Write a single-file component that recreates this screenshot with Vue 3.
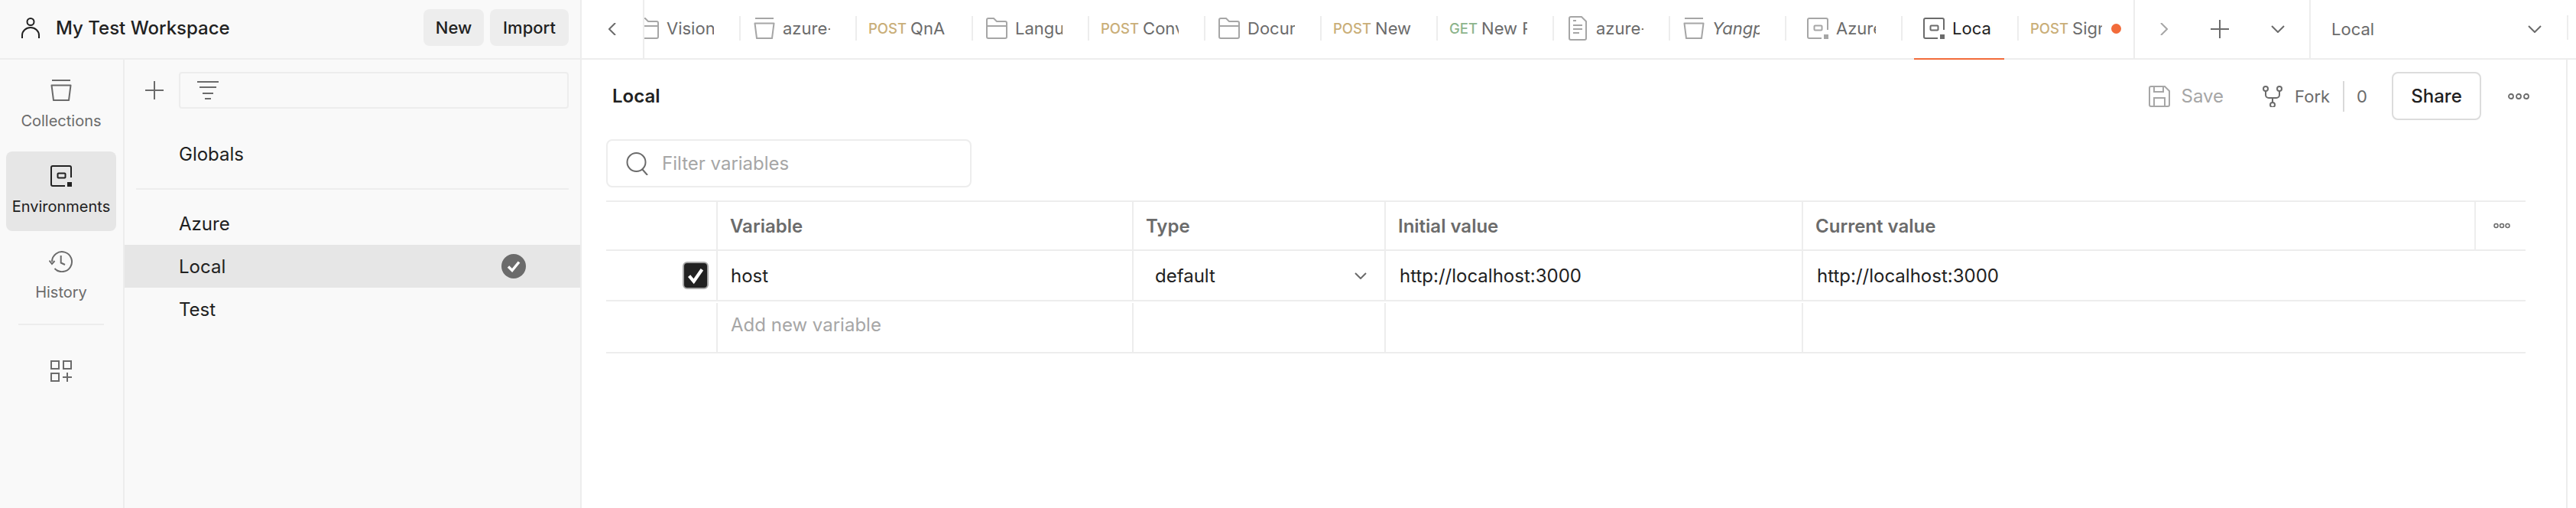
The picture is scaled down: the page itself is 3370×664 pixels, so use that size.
<script setup>
const tabs = [
  { icon: 'folder', text: 'Vision' },
  { icon: 'coll', text: 'azure-sdk' },
  { method: 'POST', text: 'QnA' },
  { icon: 'folder', text: 'Language' },
  { method: 'POST', text: 'Conversation' },
  { icon: 'folder', text: 'Document' },
  { method: 'POST', text: 'New Request' },
  { method: 'GET', text: 'New Request' },
  { icon: 'doc', text: 'azure-sdk' },
  { icon: 'coll', text: 'Yangpu', italic: true },
  { icon: 'env', text: 'Azure' },
  { icon: 'env', text: 'Local', active: true },
  { method: 'POST', text: 'Sign in', dirty: true }
]
</script>

<template>
  <div class="app">
    <aside class="left">
      <header class="ws">
        <svg class="i-person" viewBox="0 0 24 27" fill="none" stroke="#212121" stroke-width="2">
          <circle cx="12" cy="5.5" r="4.5" />
          <path d="M1 27v-4a11 10 0 0 1 22 0v4" />
        </svg>
        <span class="ws-name">My Test Workspace</span>
        <button class="ws-btn btn-new">New</button>
        <button class="ws-btn btn-imp">Import</button>
      </header>
      <div class="left-body">
        <nav class="nav">
          <div class="nav-item">
            <svg class="i28" viewBox="0 0 28 28" fill="none" stroke="#6b6b6b" stroke-width="2"><path d="M2 1h24M1.500 7.500h25L24 27H4z" stroke-linejoin="round" /></svg>
            <span>Collections</span>
          </div>
          <div class="nav-item on">
            <svg class="i28" viewBox="0 0 28 28" fill="none" stroke="#212121" stroke-width="2"><path d="M27 16V3a2 2 0 0 0-2-2H3a2 2 0 0 0-2 2v22a2 2 0 0 0 2 2h16" /><rect x="9.500" y="10.500" width="10" height="6" rx="1" /><rect x="22" y="22" width="6" height="6" fill="#212121" stroke="none" /></svg>
            <span>Environments</span>
          </div>
          <div class="nav-item">
            <svg class="i-hist" viewBox="0 0 32 28" fill="none" stroke="#6b6b6b" stroke-width="2"><path d="M4 14A13 13 0 1 1 7.500 23" /><path d="M0.500 12.500L4 17l3.500-4" /><path d="M15.700 6v9.500L21 18" /></svg>
            <span>History</span>
          </div>
          <div class="nav-sep"></div>
          <svg class="i28 nav-grid" viewBox="0 0 28 28" fill="none" stroke="#6b6b6b" stroke-width="2"><rect x="1" y="1" width="10" height="10" /><rect x="17" y="1" width="10" height="10" /><rect x="1" y="17" width="10" height="10" /><path d="M22 16v12M16 22h12" /></svg>
        </nav>
        <section class="envs">
          <div class="env-tools">
            <svg class="i-plus" viewBox="0 0 24 24" stroke="#6b6b6b" stroke-width="2"><path d="M12 0v24M0 12h24" /></svg>
            <div class="env-filter">
              <svg class="i-filter" viewBox="0 0 28 24" stroke="#6b6b6b" stroke-width="2"><path d="M0 1h28M3 8h22M7 16h14M10 23h8" /></svg>
            </div>
          </div>
          <div class="env-row global-row">Globals</div>
          <div class="env-sep"></div>
          <div class="env-row">Azure</div>
          <div class="env-row sel">
            <span>Local</span>
            <svg class="i-check" viewBox="0 0 32 32"><circle cx="16" cy="16" r="16" fill="#6b6b6b" /><path d="M9 16.500l5 5 9-11" fill="none" stroke="#fff" stroke-width="3.500" /></svg>
          </div>
          <div class="env-row">Test</div>
        </section>
      </div>
    </aside>

    <main class="right">
      <div class="topbar">
        <div class="back">
          <svg class="i-chev" viewBox="0 0 10 16" fill="none" stroke="#6b6b6b" stroke-width="2"><path d="M9 0L1 8l8 8" /></svg>
        </div>
        <div class="tabs">
          <div v-for="(t, n) in tabs" :key="n" class="tab" :class="{ active: t.active, dirty: t.dirty }">
            <div class="tab-clip">
              <span v-if="t.method" class="method" :class="t.method.toLowerCase()">{{ t.method }}</span>
              <span v-else class="tab-ico" :class="{ 'ico-env': t.icon === 'env' }">
                <svg v-if="t.icon === 'folder'" viewBox="0 0 28 28" fill="none" stroke="#a6a6a6" stroke-width="2"><path d="M1 25V3a2 2 0 0 1 2-2h7l4 4h11a2 2 0 0 1 2 2v18a2 2 0 0 1-2 2H3a2 2 0 0 1-2-2zM1 11h26" /></svg>
                <svg v-else-if="t.icon === 'coll'" viewBox="0 0 28 28" fill="none" stroke="#a6a6a6" stroke-width="2"><path d="M2 1h24M1.500 7.500h25L24 27H4z" stroke-linejoin="round" /></svg>
                <svg v-else-if="t.icon === 'doc'" class="ico-doc" viewBox="0 0 24 32" fill="none" stroke="#a6a6a6" stroke-width="2"><path d="M3 1h14l6 6v22a2 2 0 0 1-2 2H3a2 2 0 0 1-2-2V3a2 2 0 0 1 2-2z" /><path d="M6 6h4M6 12h12M6 17h12M6 22h8" /></svg>
                <svg v-else viewBox="0 0 28 28" fill="none" :stroke="t.active ? '#6b6b6b' : '#a6a6a6'" stroke-width="2"><path d="M27 16V3a2 2 0 0 0-2-2H3a2 2 0 0 0-2 2v22a2 2 0 0 0 2 2h16" /><rect x="9.500" y="10.500" width="10" height="6" rx="1" /><rect x="22" y="22" width="6" height="6" :fill="t.active ? '#6b6b6b' : '#a6a6a6'" stroke="none" /></svg>
              </span>
              <span class="tab-text" :class="{ ital: t.italic }">{{ t.text }}</span>
            </div>
            <span v-if="t.dirty" class="dot"></span>
          </div>
        </div>
        <div class="tab-ctrl">
          <svg class="i-chev" viewBox="0 0 10 16" fill="none" stroke="#a6a6a6" stroke-width="2"><path d="M1 0l8 8-8 8" /></svg>
          <svg class="i-plus" viewBox="0 0 24 24" stroke="#6b6b6b" stroke-width="2"><path d="M12 0v24M0 12h24" /></svg>
          <svg class="i-down" viewBox="0 0 18 10" fill="none" stroke="#6b6b6b" stroke-width="2"><path d="M1 1l8 8 8-8" /></svg>
        </div>
        <div class="env-sel">
          <span>Local</span>
          <svg class="i-down" viewBox="0 0 18 10" fill="none" stroke="#6b6b6b" stroke-width="2"><path d="M1 1l8 8 8-8" /></svg>
        </div>
        <div class="strip-top"></div>
      </div>

      <div class="content">
        <div class="main">
          <div class="title-row">
            <h1>Local</h1>
            <div class="actions">
              <svg class="i28" viewBox="0 0 28 28" fill="none" stroke="#a6a6a6" stroke-width="2"><path d="M1 3a2 2 0 0 1 2-2h18l6 6v18a2 2 0 0 1-2 2H3a2 2 0 0 1-2-2zM7 1v7h12V1M7 27V16h14v11" /></svg>
              <span class="save">Save</span>
              <svg class="i28 i-fork" viewBox="0 0 28 28" fill="none" stroke="#6b6b6b" stroke-width="2"><circle cx="5" cy="4" r="3" /><circle cx="23" cy="4" r="3" /><circle cx="14" cy="25" r="3" /><path d="M5 7v5a4 4 0 0 0 4 4h10a4 4 0 0 0 4-4V7M14 16v6" /></svg>
              <span class="fork">Fork</span>
              <span class="vbar"></span>
              <span class="fork count">0</span>
              <button class="share">Share</button>
              <svg class="i-more" viewBox="0 0 28 8" fill="none" stroke="#6b6b6b" stroke-width="1.800"><circle cx="4" cy="4" r="3" /><circle cx="14" cy="4" r="3" /><circle cx="24" cy="4" r="3" /></svg>
            </div>
          </div>
          <div class="search">
            <svg class="i-search" viewBox="0 0 30 30" fill="none" stroke="#6b6b6b" stroke-width="2"><circle cx="13.500" cy="13" r="12" /><path d="M21 22l7 8" /></svg>
            <span>Filter variables</span>
          </div>
          <div class="table">
            <div class="tr head">
              <div class="td"></div>
              <div class="td">Variable</div>
              <div class="td">Type</div>
              <div class="td">Initial value</div>
              <div class="td">Current value</div>
              <div class="td t-more">
                <svg class="i-more-s" viewBox="0 0 22 8" fill="none" stroke="#6b6b6b" stroke-width="1.500"><circle cx="3.500" cy="4" r="2.500" /><circle cx="11" cy="4" r="2.500" /><circle cx="18.500" cy="4" r="2.500" /></svg>
              </div>
            </div>
            <div class="tr row1">
              <div class="td t-check">
                <span class="cb"><svg viewBox="0 0 20 20" fill="none" stroke="#fff" stroke-width="3.500"><path d="M3 10.500l5 6 9-13" /></svg></span>
              </div>
              <div class="td t-name">host</div>
              <div class="td t-sel"><span>default</span><svg class="i-down-s" viewBox="0 0 16 9" fill="none" stroke="#6b6b6b" stroke-width="2"><path d="M1 1l7 7 7-7" /></svg></div>
              <div class="td t-url">http://localhost:3000</div>
              <div class="td t-url last">http://localhost:3000</div>
            </div>
            <div class="tr row2">
              <div class="td"></div>
              <div class="td t-name add">Add new variable</div>
              <div class="td"></div>
              <div class="td"></div>
              <div class="td last"></div>
            </div>
          </div>
        </div>
      </div>
    </main>
  </div>
</template>

<style>
html, body { margin: 0; background: #fff; }
</style>

<style scoped>
.app { display: flex; width: 3370px; height: 664px; overflow: hidden; font-family: Inter, "Noto Sans", sans-serif; font-size: 24px; color: #212121; background: #fff; }
svg { display: block; flex: none; }
.i28 { width: 28px; height: 28px; }

.left { width: 761px; flex: none; box-sizing: border-box; border-right: 2px solid #ededed; background: #f9f9f9; display: flex; flex-direction: column; }
.ws { height: 78px; box-sizing: border-box; border-bottom: 2px solid #ededed; display: flex; align-items: center; padding: 0 15px 4px 28px; }
.i-person { width: 24px; height: 27px; }
.ws-name { margin-left: 21px; font-weight: 500; flex: 1; }
.ws-btn { height: 48px; padding: 0; border: 0; border-radius: 8px; background: #ededed; font: 500 22px Inter, sans-serif; color: #212121; }
.btn-new { width: 79px; margin-right: 8px; }
.btn-imp { width: 103px; }
.left-body { flex: 1; display: flex; min-height: 0; }

.nav { width: 163px; flex: none; box-sizing: border-box; border-right: 2px solid #ededed; padding: 8px 9px 0 8px; display: flex; flex-direction: column; align-items: center; }
.nav-item { width: 144px; height: 104px; flex: none; border-radius: 8px; margin-bottom: 8px; display: flex; flex-direction: column; align-items: center; padding-top: 18px; box-sizing: border-box; font-size: 20px; line-height: 28px; color: #6b6b6b; }
.nav-item span { margin-top: 12px; }
.nav-item.on { background: #e6e6e6; color: #212121; }
.i-hist { width: 32px; height: 28px; }
.nav-sep { width: 112px; height: 2px; background: #ededed; margin-top: 1px; }
.nav-grid { margin-top: 46px; }

.envs { flex: 1; min-width: 0; }
.env-tools { display: flex; align-items: center; padding: 16px 15px 0 27px; }
.i-plus { width: 24px; height: 24px; }
.env-filter { margin-left: 20px; flex: 1; height: 48px; box-sizing: border-box; border: 2px solid #ededed; border-radius: 4px; display: flex; align-items: center; padding-left: 22px; }
.i-filter { width: 28px; height: 24px; }
.env-row { height: 56px; display: flex; align-items: center; justify-content: space-between; padding: 0 71px; }
.global-row { margin-top: 31px; }
.env-sep { height: 2px; background: #ededed; margin: 17px 15px 16px; }
.sel { background: #e6e6e6; }
.i-check { width: 32px; height: 32px; }

.right { flex: 1; min-width: 0; display: flex; flex-direction: column; }
.topbar { height: 78px; box-sizing: border-box; border-bottom: 2px solid #ededed; display: flex; flex: none; font-size: 22px; }
.back { width: 80px; flex: none; display: flex; align-items: center; padding-left: 35px; box-sizing: border-box; }
.i-chev { width: 10px; height: 16px; }
.tabs { width: 1950px; height: 78px; flex: none; overflow: hidden; box-sizing: border-box; border-left: 2px solid #ededed; padding-bottom: 4px; display: flex; align-items: center; }
.tabs > .tab:first-child { margin-left: -26px; }
.tab { width: 152px; height: 32px; flex: none; box-sizing: border-box; border-right: 2px solid #ededed; padding-left: 15px; display: flex; align-items: center; position: relative; }
.tab:last-child { border-right: 0; }
.tab-clip { width: 102px; overflow: hidden; display: flex; align-items: center; white-space: nowrap; height: 34px; flex: none; }
.dirty .tab-clip { width: 94px; }
.method { font-size: 18.5px; font-weight: 500; margin-right: 5px; }
.post { color: #c9ae78; }
.get { color: #8cb48c; }
.tab-ico { width: 28px; height: 28px; margin: 0 10px 0 2px; flex: none; display: flex; align-items: center; justify-content: center; }
.ico-env { margin-left: 12px; }
.tab-ico svg { width: 28px; height: 28px; }
.tab-ico .ico-doc { width: 24px; height: 32px; flex: none; }
.tab-text { color: #6b6b6b; }
.ital { font-style: italic; }
.active .tab-text { color: #212121; }
.active::after { content: ""; position: absolute; left: 15px; width: 118px; height: 2px; bottom: -25px; background: #f26b3a; }
.dot { width: 13px; height: 13px; border-radius: 50%; background: #f26b3a; margin-left: 12px; flex: none; }
.tab-ctrl { width: 230px; flex: none; box-sizing: border-box; border-left: 2px solid #ededed; display: flex; align-items: center; padding-left: 33px; }
.tab-ctrl .i-plus { margin-left: 56px; }
.tab-ctrl .i-down { margin-left: 55px; }
.i-down { width: 18px; height: 10px; }
.env-sel { width: 337px; flex: none; box-sizing: border-box; border-left: 2px solid #ededed; display: flex; align-items: center; justify-content: space-between; padding: 0 33px 0 27px; color: #6b6b6b; }
.strip-top { width: 2px; height: 32px; margin-top: 20px; background: #ededed; }

.content { flex: 1; min-height: 0; display: flex; }
.main { width: 2598px; flex: none; box-sizing: border-box; border-right: 2px solid #ededed; padding: 16px 0 0 32px; }
.title-row { display: flex; align-items: center; justify-content: space-between; padding-left: 8px; height: 63px; }
h1 { margin: 0; font-size: 24px; font-weight: 600; }
.actions { display: flex; align-items: center; margin-right: 48px; color: #6b6b6b; font-size: 22px; }
.save { margin-left: 15px; color: #a6a6a6; font-size: 24px; }
.i-fork { margin-left: 50px; }
.fork { margin-left: 15px; }
.vbar { width: 2px; height: 40px; background: #d9d9d9; margin-left: 17px; }
.count { margin-left: 16px; }
.share { width: 117px; height: 63px; margin-left: 32px; border: 2px solid #dcdcdc; border-radius: 8px; background: #fff; font: 500 24px Inter, sans-serif; color: #212121; }
.i-more { width: 28px; height: 8px; margin-left: 35px; }
.search { width: 478px; height: 63px; margin-top: 25px; box-sizing: border-box; border: 2px solid #ededed; border-radius: 8px; display: flex; align-items: center; padding-left: 24px; color: #a6a6a6; }
.search span { margin-left: 17px; }
.i-search { width: 30px; height: 30px; }

.table { width: 2511px; margin-top: 17px; border-top: 2px solid #ededed; }
.tr { display: grid; grid-template-columns: 146px 544px 330px 546px 880px 65px; border-bottom: 2px solid #ededed; }
.head { height: 64px; box-sizing: border-box; font-weight: 600; color: #6b6b6b; }
.row1 { height: 66px; box-sizing: border-box; }
.row2 { height: 68px; box-sizing: border-box; padding-top: 2px; }
.td { box-sizing: border-box; border-right: 2px solid #ededed; display: flex; align-items: center; padding-left: 16px; min-width: 0; white-space: nowrap; }
.td.last { grid-column: span 2; border-right: 0; }
.t-more { border-right: 0; padding-left: 23px; }
.i-more-s { width: 22px; height: 8px; }
.t-check { justify-content: flex-end; padding-right: 10px; padding-left: 0; }
.cb { width: 34px; height: 36px; box-sizing: border-box; border: 2px solid #a6a6a6; border-radius: 6px; background: #212121; display: flex; align-items: center; justify-content: center; }
.cb svg { width: 24px; height: 24px; }
.t-name { padding-left: 17px; }
.add { color: #a6a6a6; padding-bottom: 8px; }
.t-sel { padding: 0 23px 0 28px; justify-content: space-between; }
.i-down-s { width: 16px; height: 9px; }
.t-url { padding-left: 18px; }
</style>
